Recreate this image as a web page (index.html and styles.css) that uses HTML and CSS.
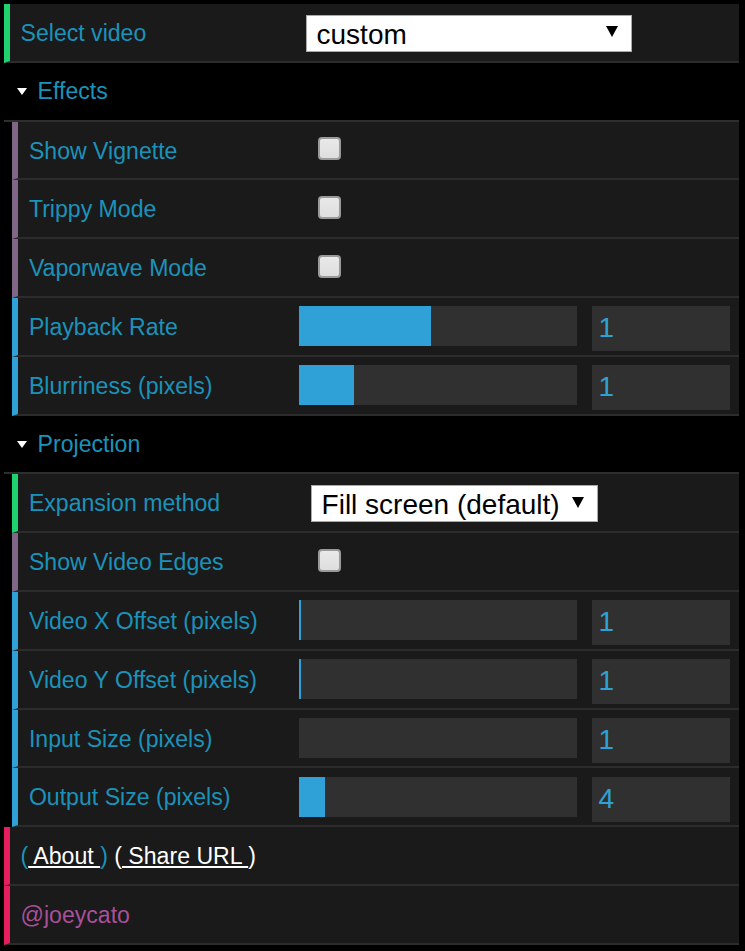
FILE: index.html
```html
<!DOCTYPE html>
<html lang="en">
<head>
<meta charset="utf-8">
<title>Controls</title>
<link rel="stylesheet" href="styles.css">
</head>
<body>
<div class="gui">
  <ul class="root">
    <li class="cr string">
      <span class="name">Select video</span>
      <div class="c"><div class="select w-video"><span class="sel-text">custom</span><span class="arrow"></span></div></div>
    </li>
    <li class="folder">
      <div class="title">Effects</div>
      <ul class="folder-body">
        <li class="cr boolean"><span class="name">Show Vignette</span><div class="c"><span class="check"></span></div></li>
        <li class="cr boolean"><span class="name">Trippy Mode</span><div class="c"><span class="check"></span></div></li>
        <li class="cr boolean"><span class="name">Vaporwave Mode</span><div class="c"><span class="check"></span></div></li>
        <li class="cr number">
          <span class="name">Playback Rate</span>
          <div class="c slider-c"><div class="slider"><div class="fill" style="width:47.6%"></div></div><div class="num">1</div></div>
        </li>
        <li class="cr number">
          <span class="name">Blurriness (pixels)</span>
          <div class="c slider-c"><div class="slider"><div class="fill" style="width:19.9%"></div></div><div class="num">1</div></div>
        </li>
      </ul>
    </li>
    <li class="folder">
      <div class="title">Projection</div>
      <ul class="folder-body">
        <li class="cr string">
          <span class="name">Expansion method</span>
          <div class="c"><div class="select w-expand"><span class="sel-text">Fill screen (default)</span><span class="arrow"></span></div></div>
        </li>
        <li class="cr boolean"><span class="name">Show Video Edges</span><div class="c"><span class="check"></span></div></li>
        <li class="cr number">
          <span class="name">Video X Offset (pixels)</span>
          <div class="c slider-c"><div class="slider"><div class="fill" style="width:0.8%"></div></div><div class="num">1</div></div>
        </li>
        <li class="cr number">
          <span class="name">Video Y Offset (pixels)</span>
          <div class="c slider-c"><div class="slider"><div class="fill" style="width:0.8%"></div></div><div class="num">1</div></div>
        </li>
        <li class="cr number">
          <span class="name">Input Size (pixels)</span>
          <div class="c slider-c"><div class="slider"><div class="fill" style="width:0%"></div></div><div class="num">1</div></div>
        </li>
        <li class="cr number">
          <span class="name">Output Size (pixels)</span>
          <div class="c slider-c"><div class="slider"><div class="fill" style="width:9.4%"></div></div><div class="num">4</div></div>
        </li>
      </ul>
    </li>
    <li class="cr function">
      <span class="name wide"><span class="paren-blue">(<a class="link" href="#"> About </a>)</span> <span class="paren-white">(<a class="link" href="#"> Share URL </a>)</span></span>
    </li>
    <li class="cr function">
      <span class="name wide handle">@joeycato</span>
    </li>
  </ul>
</div>
</body>
</html>
```

FILE: styles.css
```css
* {
  box-sizing: border-box;
}

html,
body {
  margin: 0;
  background: #000;
}

body {
  padding: 4px 0 0 4px;
  font-family: "Liberation Sans", Arial, sans-serif;
}

.gui {
  width: 735px;
}

.gui ul {
  list-style: none;
  margin: 0;
  padding: 0;
}

.gui ul.folder-body {
  padding-left: 8.4px;
}

.cr {
  display: flex;
  align-items: center;
  height: 58.8px;
  border-bottom: 2px solid #2c2c2c;
  border-left: 6.3px solid #2fa1d6;
  padding: 0 8.4px 0 10.5px;
  background: #1a1a1a;
  font-size: 23.1px;
  color: #1a93bb;
}

.cr.string {
  border-left-color: #1ed36f;
}

.cr.boolean {
  border-left-color: #806787;
}

.cr.number {
  border-left-color: #2fa1d6;
}

.cr.function {
  border-left-color: #e61d5f;
}

.name {
  flex: none;
  width: 40%;
  padding-top: 2px;
  line-height: 54.8px;
  white-space: nowrap;
  overflow: hidden;
}

.name.wide {
  width: 100%;
}

.c {
  flex: none;
  width: 60%;
  height: 100%;
  display: flex;
  align-items: center;
}

.c.slider-c {
  align-items: flex-start;
  padding-top: 8.4px;
}

.title {
  position: relative;
  height: 58.8px;
  border-bottom: 2px solid #2e2e2e;
  background: #000;
  padding-left: 33.6px;
  line-height: 56.8px;
  font-size: 23.1px;
  color: #1a93bb;
}

.title::before {
  content: "";
  position: absolute;
  left: 13px;
  top: 25px;
  border-left: 5px solid transparent;
  border-right: 5px solid transparent;
  border-top: 7px solid #fff;
}

.select {
  display: flex;
  align-items: center;
  height: 37px;
  margin-top: 2px;
  margin-left: 1px;
  border: 1px solid #a9a9a9;
  background: #fff;
  color: #000;
  font-size: 28px;
  padding: 3px 0 0 10px;
  white-space: nowrap;
}

.w-video {
  width: 326px;
}

.w-expand {
  width: 287px;
}

.arrow {
  margin-left: auto;
  margin-right: 13px;
  margin-bottom: 6px;
  width: 0;
  height: 0;
  border-left: 6px solid transparent;
  border-right: 6px solid transparent;
  border-top: 11px solid #000;
}

.check {
  width: 23px;
  height: 23px;
  margin-left: 8.5px;
  margin-bottom: 2px;
  border: 2px solid #9a9a9a;
  border-radius: 4px;
  background: linear-gradient(#e9e9e9, #dedede);
}

.slider {
  flex: none;
  width: 66%;
  height: 39.9px;
  margin-left: -10.5px;
  background: #303030;
}

.fill {
  height: 100%;
  background: #2fa1d6;
}

.num {
  margin-left: auto;
  margin-right: 1px;
  width: calc(30% + 11px);
  height: 45px;
  line-height: 44px;
  padding-left: 6.3px;
  background: #303030;
  color: #2fa1d6;
  font-size: 28px;
}

.paren-blue {
  color: #1a93bb;
}

.paren-white {
  color: #fff;
}

.link {
  color: #fff;
  text-decoration: underline;
}

.handle {
  color: #a8509a;
}
```
